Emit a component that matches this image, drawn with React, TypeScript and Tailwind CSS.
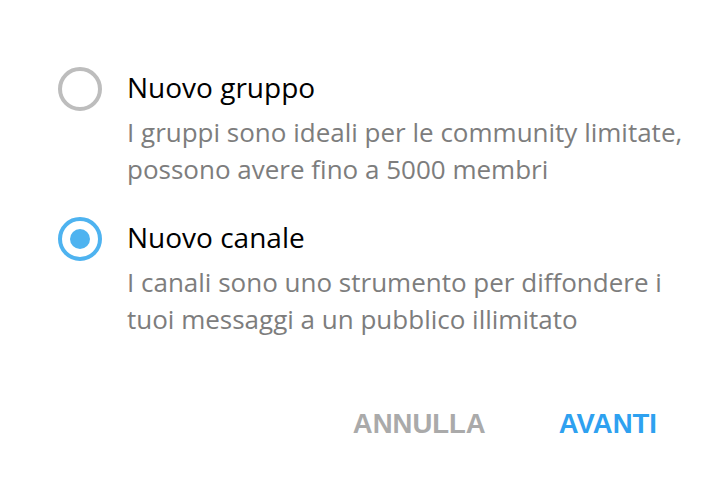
import React from "react";

function Radio({ checked }: { checked: boolean }) {
  return (
    <div
      className={
        "w-[44px] h-[44px] rounded-full border-[4px] flex items-center justify-center shrink-0 " +
        (checked ? "border-[#4eb3f0]" : "border-[#bdbdbd]")
      }
    >
      {checked && <div className="w-[20px] h-[20px] rounded-full bg-[#4eb3f0]" />}
    </div>
  );
}

function Option({ checked, title, lines }: { checked: boolean; title: string; lines: string[] }) {
  return (
    <div className="flex items-start">
      <div className="mt-[2px]">
        <Radio checked={checked} />
      </div>
      <div className="ml-[25px] flex flex-col">
        <div className="text-[28px] leading-[44px] text-black whitespace-nowrap">{title}</div>
        <div className="text-[26px] leading-[37px] text-[#7d7d7d] mt-[5px] whitespace-nowrap">
          {lines.map((l, i) => (
            <div key={i}>{l}</div>
          ))}
        </div>
      </div>
    </div>
  );
}

export default function App() {
  return (
    <div
      className="w-[722px] h-[488px] bg-white flex flex-col overflow-hidden"
      style={{ fontFamily: '"Open Sans", sans-serif' }}
    >
      <div className="pl-[58px] pt-[65px] flex flex-col gap-[27px]">
        <Option
          checked={false}
          title="Nuovo gruppo"
          lines={["I gruppi sono ideali per le community limitate,", "possono avere fino a 5000 membri"]}
        />
        <Option
          checked={true}
          title="Nuovo canale"
          lines={["I canali sono uno strumento per diffondere i", "tuoi messaggi a un pubblico illimitato"]}
        />
      </div>
      <div
        className="flex justify-end mt-[70px] pr-[65px] gap-[73px] text-[27.5px] leading-[32px] font-bold"
        style={{ fontFamily: '"Liberation Sans", Arial, sans-serif' }}
      >
        <span className="text-[#aaaaaa]">ANNULLA</span>
        <span className="text-[#2ea1f0]">AVANTI</span>
      </div>
    </div>
  );
}
